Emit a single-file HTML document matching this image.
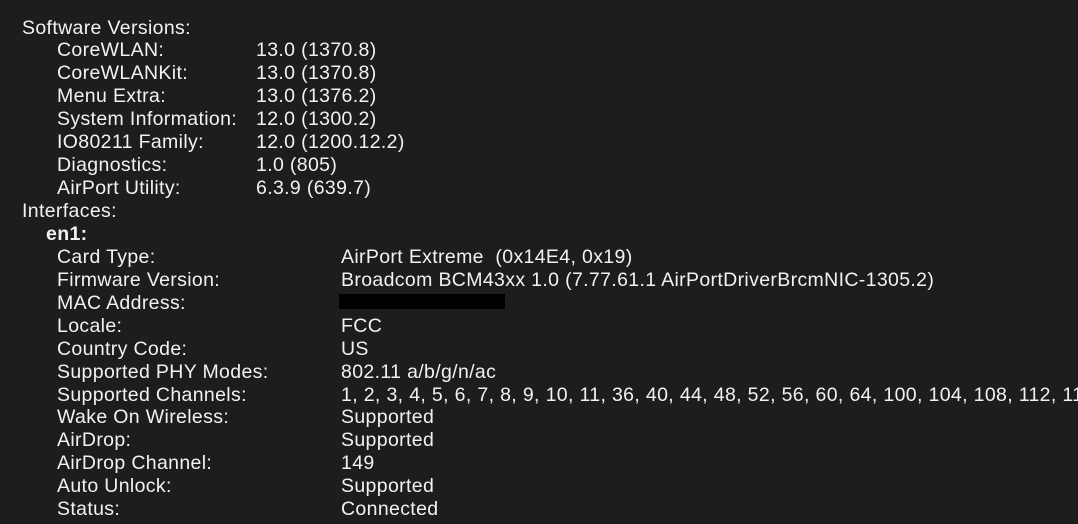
<!DOCTYPE html>
<html><head><meta charset="utf-8"><style>
html,body{margin:0;padding:0;background:#1e1c1d;width:1078px;height:524px;overflow:hidden}
body{position:relative;font-family:"Liberation Sans",sans-serif;font-size:19.5px;color:#f2f2f2;letter-spacing:0.35px}
div{position:absolute;white-space:nowrap;line-height:22px;margin-top:1px}
.b{font-weight:bold}
.r{position:absolute;left:339px;top:294px;width:166px;height:15px;background:#000}
</style></head><body>
<div style="left:22px;top:16px">Software Versions:</div>
<div style="left:57px;top:38px">CoreWLAN:</div><div style="left:256px;top:38px">13.0 (1370.8)</div>
<div style="left:57px;top:61px">CoreWLANKit:</div><div style="left:256px;top:61px">13.0 (1370.8)</div>
<div style="left:57px;top:84px">Menu Extra:</div><div style="left:256px;top:84px">13.0 (1376.2)</div>
<div style="left:57px;top:107px">System Information:</div><div style="left:256px;top:107px">12.0 (1300.2)</div>
<div style="left:57px;top:130px">IO80211 Family:</div><div style="left:256px;top:130px">12.0 (1200.12.2)</div>
<div style="left:57px;top:153px">Diagnostics:</div><div style="left:256px;top:153px">1.0 (805)</div>
<div style="left:57px;top:176px">AirPort Utility:</div><div style="left:256px;top:176px">6.3.9 (639.7)</div>
<div style="left:22px;top:199px">Interfaces:</div>
<div class="b" style="left:46px;top:222px">en1:</div>
<div style="left:57px;top:245px">Card Type:</div><div style="left:341px;top:245px">AirPort Extreme&nbsp; (0x14E4, 0x19)</div>
<div style="left:57px;top:268px">Firmware Version:</div><div style="left:341px;top:268px">Broadcom BCM43xx 1.0 (7.77.61.1 AirPortDriverBrcmNIC-1305.2)</div>
<div style="left:57px;top:291px">MAC Address:</div><span class="r"></span>
<div style="left:57px;top:314px">Locale:</div><div style="left:341px;top:314px">FCC</div>
<div style="left:57px;top:337px">Country Code:</div><div style="left:341px;top:337px">US</div>
<div style="left:57px;top:360px">Supported PHY Modes:</div><div style="left:341px;top:360px">802.11 a/b/g/n/ac</div>
<div style="left:57px;top:383px">Supported Channels:</div><div style="left:341px;top:383px">1, 2, 3, 4, 5, 6, 7, 8, 9, 10, 11, 36, 40, 44, 48, 52, 56, 60, 64, 100, 104, 108, 112, 116</div>
<div style="left:57px;top:405px">Wake On Wireless:</div><div style="left:341px;top:405px">Supported</div>
<div style="left:57px;top:428px">AirDrop:</div><div style="left:341px;top:428px">Supported</div>
<div style="left:57px;top:451px">AirDrop Channel:</div><div style="left:341px;top:451px">149</div>
<div style="left:57px;top:474px">Auto Unlock:</div><div style="left:341px;top:474px">Supported</div>
<div style="left:57px;top:497px">Status:</div><div style="left:341px;top:497px">Connected</div>
<div style="left:57px;top:520px">Current Network Information:</div>
</body></html>
